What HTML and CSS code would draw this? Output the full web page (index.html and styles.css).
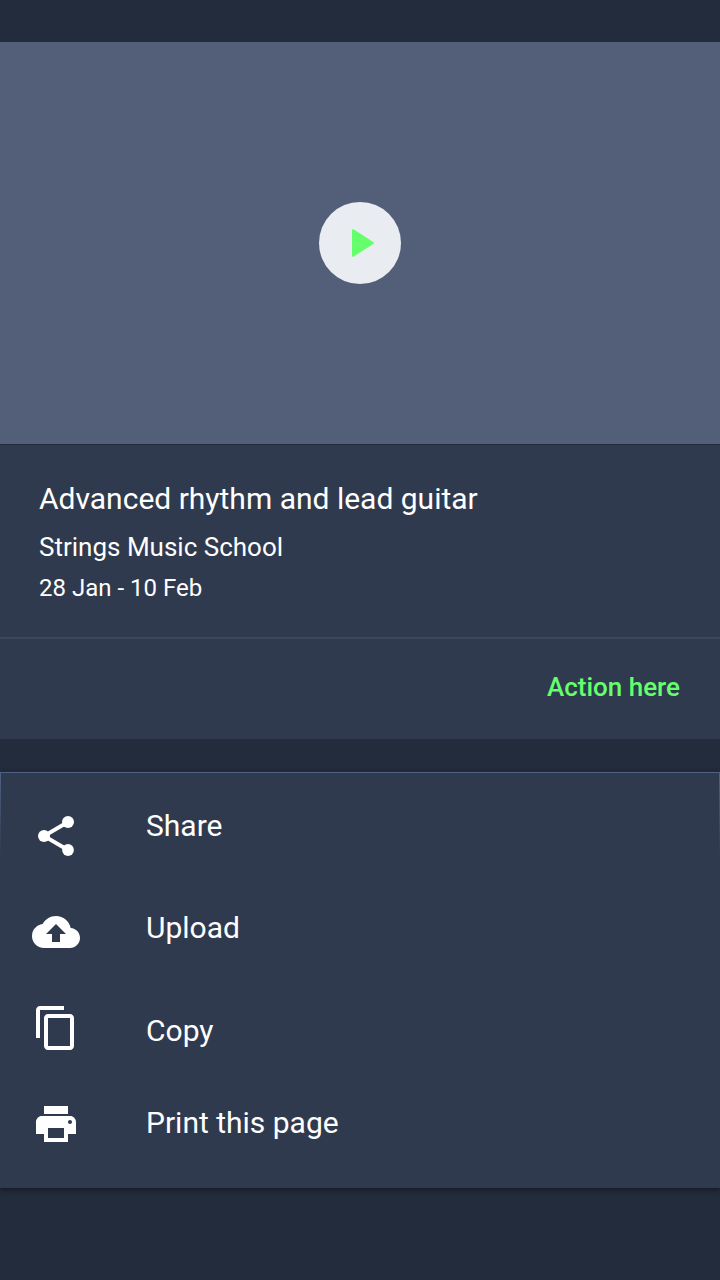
FILE: index.html
```html
<!DOCTYPE html>
<html lang="en">
<head>
<meta charset="utf-8">
<title>Advanced rhythm and lead guitar</title>
<link rel="stylesheet" href="styles.css">
</head>
<body>
<main class="screen">
  <article class="card">
    <div class="media">
      <button class="play" aria-label="Play">
        <svg class="play-icon" viewBox="0 0 82 82"><path d="M34 28.2L54 41L34 53.8Z"/></svg>
      </button>
    </div>
    <div class="info">
      <h1 class="title">Advanced rhythm and lead guitar</h1>
      <p class="school">Strings Music School</p>
      <p class="dates">28 Jan - 10 Feb</p>
    </div>
    <div class="actions"><a class="action">Action here</a></div>
  </article>
  <nav class="menu">
    <div class="icons">
      <svg class="icon" viewBox="0 0 24 24"><path d="M18 5L6 12L18 19" fill="none" stroke="#fff" stroke-width="1.9"/><circle cx="18" cy="5" r="3"/><circle cx="6" cy="12" r="3"/><circle cx="18" cy="19" r="2.950"/></svg>
      <svg class="icon" viewBox="0 0 24 24"><path d="M19.350 10.040C18.670 6.590 15.640 4 12 4 9.110 4 6.600 5.640 5.350 8.040 2.340 8.360 0 10.910 0 14c0 3.310 2.690 6 6 6h13c2.760 0 5-2.240 5-5 0-2.640-2.050-4.780-4.650-4.960zM14 13v4h-4v-4H7l5-5 5 5h-3z"/></svg>
      <svg class="icon" viewBox="0 0 24 24"><path d="M16 1H4c-1.100 0-2 .9-2 2v14h2V3h12V1zm3 4H8c-1.100 0-2 .9-2 2v14c0 1.100.9 2 2 2h11c1.100 0 2-.9 2-2V7c0-1.100-.9-2-2-2zm0 16H8V7h11v14z"/></svg>
      <svg class="icon" viewBox="0 0 24 24"><path d="M19 8H5c-1.660 0-3 1.340-3 3v6h4v4h12v-4h4v-6c0-1.660-1.340-3-3-3zm-3 11H8v-5h8v5zm3-7c-.55 0-1-.45-1-1s.45-1 1-1 1 .45 1 1-.45 1-1 1zm-1-9H6v4h12V3z"/></svg>
    </div>
    <div class="labels">
      <a class="label">Share</a>
      <a class="label label-upload">Upload</a>
      <a class="label label-copy">Copy</a>
      <a class="label">Print this page</a>
    </div>
  </nav>
</main>
</body>
</html>
```
FILE: styles.css
```css
* { box-sizing: border-box; }
body {
  margin: 0;
  background: #232c3c;
  color: #fff;
  font-family: Roboto, "Liberation Sans", sans-serif;
}
.screen {
  display: flex;
  flex-direction: column;
  gap: 33px;
  height: 1280px;
  padding-top: 42px;
}
.card { background: #303a4e; }
.media {
  display: flex;
  align-items: center;
  justify-content: center;
  height: 402px;
  background: #535f79;
}
.play {
  width: 82px;
  height: 82px;
  padding: 0;
  border: 0;
  border-radius: 50%;
  background: #e9edf2;
}
.play-icon {
  display: block;
  fill: #65ff6c;
  stroke: #65ff6c;
  stroke-width: 2;
  stroke-linejoin: round;
}
.info {
  height: 195px;
  padding: 34px 39px 0;
  border-top: 1px solid #232c3c;
  border-bottom: 2px solid #3b475b;
}
.title {
  margin: 0 0 8px;
  font-size: 30px;
  font-weight: 400;
  line-height: 40px;
}
.school {
  margin: 0 0 5px;
  font-size: 26px;
  line-height: 40px;
}
.dates {
  margin: 0;
  font-size: 24px;
  line-height: 32px;
}
.actions {
  display: flex;
  align-items: center;
  justify-content: flex-end;
  height: 100px;
  padding: 0 40px 4px;
}
.action {
  color: #65ff6c;
  font-size: 26px;
  font-weight: 500;
}
.menu {
  display: flex;
  gap: 66px;
  height: 416px;
  padding: 33px 31px 0;
  border: 1px solid;
  border-image: linear-gradient(#4f6186, #303a4e 20%) 1;
  border-bottom: 0;
  background: #303a4e;
  box-shadow: 0 2px 5px rgba(10, 14, 24, .6);
}
.icons {
  display: flex;
  flex-direction: column;
  gap: 48px;
  padding-top: 6px;
}
.icon {
  display: block;
  width: 48px;
  height: 48px;
  fill: #fff;
}
.labels {
  display: flex;
  flex-direction: column;
  gap: 52px;
}
.label {
  font-size: 30px;
  line-height: 40px;
}
.label-upload { margin: 10px 0; }
.label-copy { margin-top: 1px; }
```
